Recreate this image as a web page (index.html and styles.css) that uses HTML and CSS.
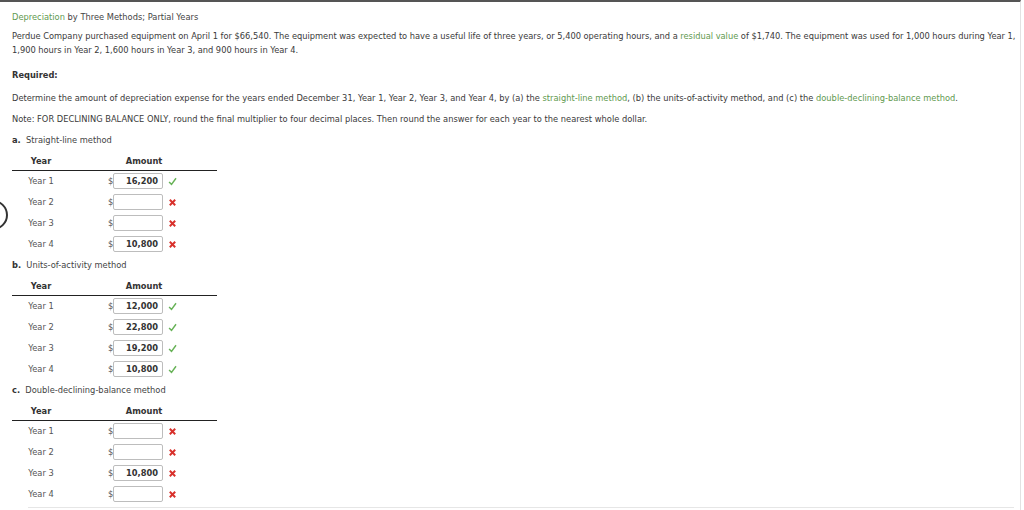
FILE: index.html
```html
<!DOCTYPE html>
<html>
<head>
<meta charset="utf-8">
<link rel="stylesheet" href="styles.css">
</head>
<body>
<div class="page">
  <div class="title"><span class="link">Depreciation</span> by Three Methods; Partial Years</div>
  <p class="intro">Perdue Company purchased equipment on April 1 for $66,540. The equipment was expected to have a useful life of three years, or 5,400 operating hours, and a <span class="link">residual value</span> of $1,740. The equipment was used for 1,000 hours during Year 1, 1,900 hours in Year 2, 1,600 hours in Year 3, and 900 hours in Year 4.</p>
  <div class="required">Required:</div>
  <p class="determine">Determine the amount of depreciation expense for the years ended December 31, Year 1, Year 2, Year 3, and Year 4, by (a) the <span class="link">straight-line method</span>, (b) the units-of-activity method, and (c) the <span class="link">double-declining-balance method</span>.</p>
  <p class="note">Note: FOR DECLINING BALANCE ONLY, round the final multiplier to four decimal places. Then round the answer for each year to the nearest whole dollar.</p>

  <div class="section first"><b>a.</b>&nbsp; Straight-line method</div>
  <div class="table">
    <div class="thead"><div class="c-year">Year</div><div class="c-amt">Amount</div></div>
    <div class="row"><div class="c-year">Year 1</div><span class="dollar">$</span><div class="box">16,200</div><svg class="icon" viewBox="0 0 10 10"><path d="M1.2 5.6 L3.9 8.2 L8.9 1.4" class="ok"/></svg></div>
    <div class="row"><div class="c-year">Year 2</div><span class="dollar">$</span><div class="box"></div><svg class="icon" viewBox="0 0 10 10"><path d="M2 2 L8 8 M8 2 L2 8" class="bad"/></svg></div>
    <div class="row"><div class="c-year">Year 3</div><span class="dollar">$</span><div class="box"></div><svg class="icon" viewBox="0 0 10 10"><path d="M2 2 L8 8 M8 2 L2 8" class="bad"/></svg></div>
    <div class="row"><div class="c-year">Year 4</div><span class="dollar">$</span><div class="box">10,800</div><svg class="icon" viewBox="0 0 10 10"><path d="M2 2 L8 8 M8 2 L2 8" class="bad"/></svg></div>
  </div>

  <div class="section"><b>b.</b>&nbsp; Units-of-activity method</div>
  <div class="table">
    <div class="thead"><div class="c-year">Year</div><div class="c-amt">Amount</div></div>
    <div class="row"><div class="c-year">Year 1</div><span class="dollar">$</span><div class="box">12,000</div><svg class="icon" viewBox="0 0 10 10"><path d="M1.2 5.6 L3.9 8.2 L8.9 1.4" class="ok"/></svg></div>
    <div class="row"><div class="c-year">Year 2</div><span class="dollar">$</span><div class="box">22,800</div><svg class="icon" viewBox="0 0 10 10"><path d="M1.2 5.6 L3.9 8.2 L8.9 1.4" class="ok"/></svg></div>
    <div class="row"><div class="c-year">Year 3</div><span class="dollar">$</span><div class="box">19,200</div><svg class="icon" viewBox="0 0 10 10"><path d="M1.2 5.6 L3.9 8.2 L8.9 1.4" class="ok"/></svg></div>
    <div class="row"><div class="c-year">Year 4</div><span class="dollar">$</span><div class="box">10,800</div><svg class="icon" viewBox="0 0 10 10"><path d="M1.2 5.6 L3.9 8.2 L8.9 1.4" class="ok"/></svg></div>
  </div>

  <div class="section"><b>c.</b>&nbsp; Double-declining-balance method</div>
  <div class="table">
    <div class="thead"><div class="c-year">Year</div><div class="c-amt">Amount</div></div>
    <div class="row"><div class="c-year">Year 1</div><span class="dollar">$</span><div class="box"></div><svg class="icon" viewBox="0 0 10 10"><path d="M2 2 L8 8 M8 2 L2 8" class="bad"/></svg></div>
    <div class="row"><div class="c-year">Year 2</div><span class="dollar">$</span><div class="box"></div><svg class="icon" viewBox="0 0 10 10"><path d="M2 2 L8 8 M8 2 L2 8" class="bad"/></svg></div>
    <div class="row"><div class="c-year">Year 3</div><span class="dollar">$</span><div class="box">10,800</div><svg class="icon" viewBox="0 0 10 10"><path d="M2 2 L8 8 M8 2 L2 8" class="bad"/></svg></div>
    <div class="row"><div class="c-year">Year 4</div><span class="dollar">$</span><div class="box"></div><svg class="icon" viewBox="0 0 10 10"><path d="M2 2 L8 8 M8 2 L2 8" class="bad"/></svg></div>
  </div>
  <div class="bottom-rule"></div>
  <div class="edge-circle"></div>
</div>
</body>
</html>
```

FILE: styles.css
```css
html, body {
  margin: 0;
  padding: 0;
  background: #fff;
}
body {
  font-family: "DejaVu Sans", Verdana, sans-serif;
  font-size: 8.3px;
  color: #3a3a3a;
  overflow: hidden;
}
.page {
  position: relative;
  box-sizing: border-box;
  width: 1021px;
  height: 510px;
  border-top: 2px solid #555;
  border-right: 1px solid #e2e2e2;
  padding: 8px 0 0 12px;
  overflow: hidden;
}
.title {
  line-height: 14px;
  color: #444;
}
.link {
  color: #5f9a4f;
}
p {
  margin: 0;
}
.intro {
  margin-top: 5px;
  line-height: 14px;
  width: 1008px;
  letter-spacing: -0.02px;
}
.required {
  margin-top: 11px;
  line-height: 14px;
  font-weight: bold;
  color: #333;
}
.determine {
  margin-top: 9px;
  line-height: 14px;
}
.note {
  margin-top: 7px;
  line-height: 14px;
}
.section {
  margin-top: 3px;
  line-height: 14px;
  color: #444;
}
.section.first {
  margin-top: 7px;
}
.section b {
  color: #333;
}
.table {
  width: 205px;
  margin-top: 7px;
}
.thead {
  display: flex;
  line-height: 14px;
  padding-bottom: 2px;
  border-bottom: 1px solid #222;
  font-weight: bold;
  color: #333;
}
.c-year {
  width: 58px;
  text-align: center;
}
.thead .c-amt {
  margin-left: 38px;
  width: 72px;
  text-align: center;
}
.row {
  display: flex;
  align-items: center;
  height: 16px;
  padding: 2px 0 3px;
  color: #555;
}
.dollar {
  margin-left: 38px;
  width: 5px;
  color: #555;
  overflow: hidden;
}
.box {
  box-sizing: border-box;
  width: 50px;
  height: 16px;
  border: 1px solid #bdbdbd;
  border-radius: 2px;
  text-align: right;
  padding-right: 4px;
  line-height: 14px;
  font-weight: bold;
  color: #333;
  font-size: 8.3px;
}
.icon {
  width: 9px;
  height: 9px;
  margin-left: 5px;
}
.ok {
  fill: none;
  stroke: #67b257;
  stroke-width: 1.6;
}
.bad {
  fill: none;
  stroke: #d8312c;
  stroke-width: 2.2;
}
.bottom-rule {
  position: absolute;
  left: 28px;
  right: 6px;
  top: 505px;
  border-top: 1px solid #e6e6e6;
}
.edge-circle {
  position: absolute;
  left: -22px;
  top: 198px;
  width: 26px;
  height: 26px;
  border: 2px solid #333;
  border-radius: 50%;
}
```
